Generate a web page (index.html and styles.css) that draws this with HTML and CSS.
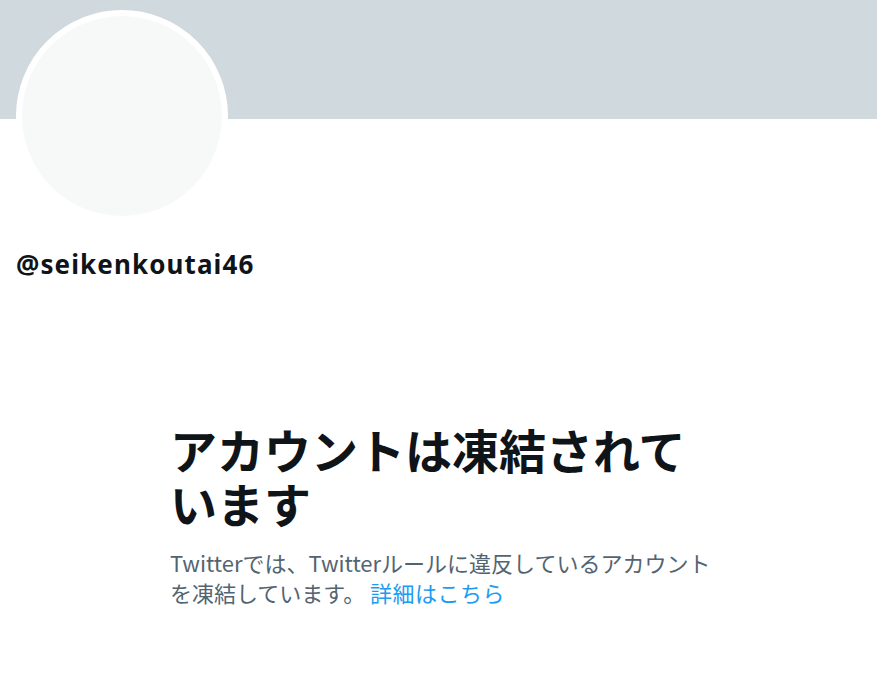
FILE: index.html
```html
<!DOCTYPE html>
<html lang="ja">
<head>
<meta charset="utf-8">
<title>@seikenkoutai46</title>
<link rel="stylesheet" href="styles.css">
</head>
<body>
<div class="banner"></div>
<div class="profile">
  <div class="avatar"></div>
  <div class="handle">@seikenkoutai46</div>
</div>
<div class="empty">
  <h1 class="title">アカウントは凍結されています</h1>
  <p class="sub">Twitterでは、Twitterルールに違反しているアカウントを凍結しています。 <a class="link" href="#">詳細はこちら</a></p>
</div>
</body>
</html>
```
FILE: styles.css
```css
html, body {
  margin: 0;
  padding: 0;
  background: #ffffff;
}
body {
  font-family: "Noto Sans", "Noto Sans CJK JP", sans-serif;
  color: #0f1419;
}
.banner {
  height: 119px;
  background: #cfd9de;
}
.profile {
  padding: 0 16px;
}
.avatar {
  width: 200px;
  height: 200px;
  margin-top: -109px;
  border: 6px solid #ffffff;
  border-radius: 50%;
  background: #f7f9f9;
}
.handle {
  margin-top: 25px;
  font-size: 26px;
  line-height: 34px;
  font-weight: 700;
  letter-spacing: 1.1px;
}
.empty {
  width: 537px;
  margin: 0 auto;
  padding-top: 141px;
}
.title {
  margin: 0;
  font-family: "Noto Sans CJK JP", sans-serif;
  font-size: 47px;
  line-height: 54px;
  font-weight: 700;
}
.sub {
  width: 548px;
  margin: 17px 0 0;
  font-family: "Noto Sans CJK JP", sans-serif;
  font-size: 22px;
  line-height: 30px;
  color: #536471;
}
.link {
  color: #1d9bf0;
  text-decoration: none;
  letter-spacing: 0.5px;
}
```
